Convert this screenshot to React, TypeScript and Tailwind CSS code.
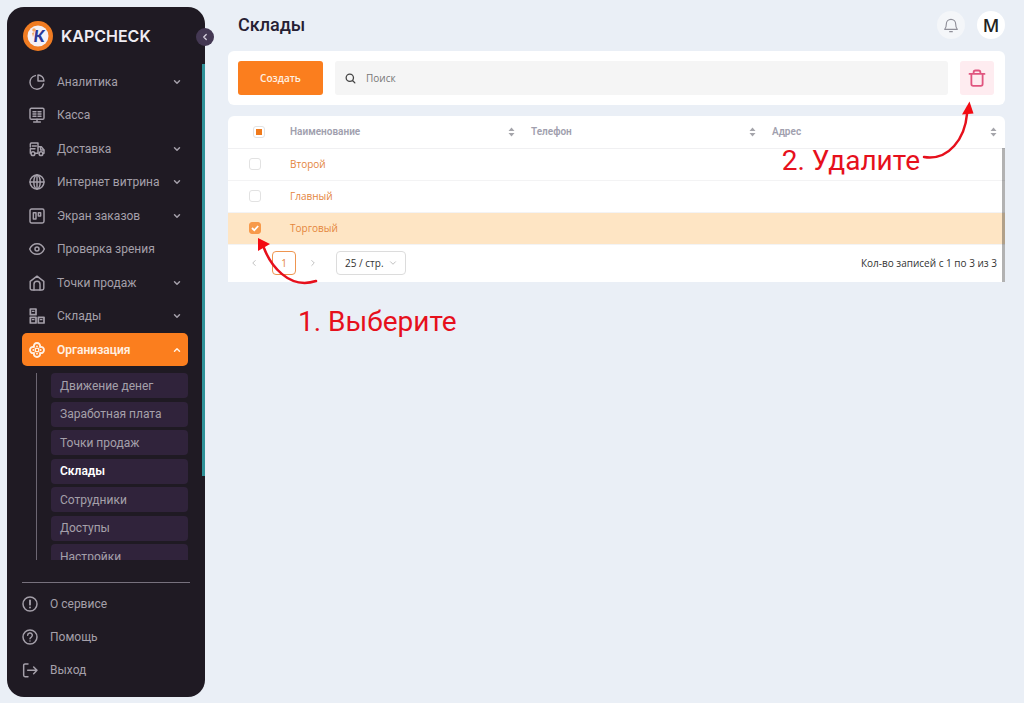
import { useState } from "react";
import type { ReactNode } from "react";
import { ChevronDown, ChevronLeft, ChevronRight, ChevronUp } from "lucide-react";
import clsx from "clsx";

const Icon = ({ children, className = "size-4" }: { children: ReactNode; className?: string }) => (
  <svg
    viewBox="0 0 24 24"
    fill="none"
    stroke="currentColor"
    strokeWidth="2.2"
    strokeLinecap="round"
    strokeLinejoin="round"
    aria-hidden="true"
    className={clsx("shrink-0", className)}
  >
    {children}
  </svg>
);

const menu = [
  {
    label: "Аналитика",
    expandable: true,
    icon: (
      <>
        <path d="M9.5 2.4A10.3 10.3 0 1 0 21.8 15" />
        <path d="M13.5 1.5v9h9a9 9 0 0 0-9-9z" />
      </>
    ),
  },
  {
    label: "Касса",
    expandable: false,
    icon: (
      <>
        <rect x="1.5" y="2" width="21" height="16.5" rx="2" />
        <path d="M12 18.5v4M7 22.5h10M6 7h4.5M6 10.5h4.5M6 14h4.5M13.5 7H18M13.5 10.5H18M13.5 14H18" />
      </>
    ),
  },
  {
    label: "Доставка",
    expandable: true,
    icon: (
      <>
        <path d="M2 9V4.500A1.500 1.500 0 0 1 3.500 3h10v15.500H9.500M5 7.500h6M2 11.500h7M2 12v6.500M14 8.500h4.500l4 5v5H21" />
        <path d="M22 13.5h-4.5v-5" />
        <circle cx="6" cy="19" r="2.8" />
        <circle cx="18" cy="19" r="2.8" />
      </>
    ),
  },
  {
    label: "Интернет витрина",
    expandable: true,
    icon: (
      <>
        <circle cx="12" cy="12" r="10.5" />
        <ellipse cx="12" cy="12" rx="4.8" ry="10.5" />
        <path d="M1.5 12h21M12 1.5v21" />
      </>
    ),
  },
  {
    label: "Экран заказов",
    expandable: true,
    icon: (
      <>
        <rect x="1.5" y="1.5" width="21" height="21" rx="2.5" />
        <rect x="6.5" y="7" width="4" height="9.5" />
        <rect x="14" y="7" width="3.5" height="5" />
      </>
    ),
  },
  {
    label: "Проверка зрения",
    expandable: false,
    icon: (
      <>
        <path d="M1 12C3.2 7 7.2 4 12 4s8.8 3 11 8c-2.2 5-6.2 8-11 8S3.2 17 1 12z" />
        <circle cx="12" cy="12" r="3" />
      </>
    ),
  },
  {
    label: "Точки продаж",
    expandable: true,
    icon: (
      <>
        <path d="M1.8 9.5 12 1.8l10.2 7.7V20a2.5 2.5 0 0 1-2.5 2.5H4.3A2.5 2.5 0 0 1 1.8 20z" />
        <path d="M7.5 22.5V14a4.5 4.5 0 0 1 9 0v8.500" />
      </>
    ),
  },
  {
    label: "Склады",
    expandable: true,
    icon: (
      <>
        <path d="M2 1.5h8.5V10H2zM2 14h8.5v8.5H2zM14 14h8.5v8.5H14z" strokeWidth="2.6" />
        <path d="M5 5h2.5M5 17.5h2.5M17 17.5h2.5" strokeWidth="2" />
      </>
    ),
  },
];

const submenu = [
  "Движение денег",
  "Заработная плата",
  "Точки продаж",
  "Склады",
  "Сотрудники",
  "Доступы",
  "Настройки",
];

const footerMenu = [
  {
    label: "О сервисе",
    icon: (
      <>
        <circle cx="12" cy="12" r="10.5" />
        <path d="M12 6.5V13M12 17v.2" strokeWidth="2.8" />
      </>
    ),
  },
  {
    label: "Помощь",
    icon: (
      <>
        <circle cx="12" cy="12" r="10.5" />
        <path d="M8.5 9.5a3.5 3.5 0 1 1 5.2 3c-1.2.7-1.7 1.1-1.7 2.3M12 18v.1" />
      </>
    ),
  },
  {
    label: "Выход",
    icon: (
      <>
        <path d="M9 3H4.5a2 2 0 0 0-2 2v15a2 2 0 0 0 2 2H9" />
        <path d="M8.5 12.5h14M17.5 7.5l5 5-5 5" />
      </>
    ),
  },
];

const columns = ["Наименование", "Телефон", "Адрес"];
const warehouses = ["Второй", "Главный", "Торговый"];

const Logo = () => (
  <svg viewBox="0 0 30 30" className="size-[30px]" aria-hidden="true">
    <circle cx="15" cy="15" r="15" fill="#f07c22" />
    <circle cx="15" cy="15" r="10.5" fill="#f4f1f6" />
    <text
      x="16"
      y="21"
      textAnchor="middle"
      fill="#2b3a96"
      fontFamily="Lato, sans-serif"
      fontSize="17"
      fontWeight="900"
      fontStyle="italic"
    >
      K
    </text>
    <circle cx="11" cy="9" r="1.8" fill="#f3a765" />
    <path d="m9 12 2.500-1-1.500 5z" fill="#f3a765" />
  </svg>
);

const Sorter = () => (
  <svg viewBox="0 0 7 10" fill="#a5a5ab" className="h-[10px] w-[7px]" aria-hidden="true">
    <path d="M3.5.5 6.5 4h-6zM3.5 9.5l3-3.5h-6z" />
  </svg>
);

function Sidebar() {
  return (
    <aside className="relative flex w-[198px] shrink-0 flex-col rounded-[17px] bg-[#1f1a23] text-[12px] whitespace-nowrap text-[#a5a0aa]">
      <a href="#home" className="flex h-[58px] shrink-0 items-center gap-2 pl-4">
        <Logo />
        <span className="font-['Inter',sans-serif] text-[16px] font-semibold text-[#efecf2]">KAPCHECK</span>
      </a>
      <button
        aria-label="Свернуть меню"
        className="absolute top-[21px] -right-[9px] z-10 flex size-[18px] items-center justify-center rounded-full bg-[#443853] text-[#d8d2df]"
      >
        <ChevronLeft className="size-[10px]" strokeWidth={3} />
      </button>
      <div className="absolute top-[57px] right-0 h-[412px] w-[3px] bg-[#2f9299]" />

      <nav className="min-h-0 flex-1 overflow-hidden pr-[17px] pl-[15px]">
        <div className="flex min-h-[301px] flex-col justify-between">
          {menu.map((item) => (
            <button key={item.label} className="flex h-[33px] items-center gap-3 pr-[6px] pl-[7px]">
              <Icon>{item.icon}</Icon>
              <span className="flex-1 text-left">{item.label}</span>
              {item.expandable && <ChevronDown className="size-[10px]" strokeWidth={3.5} />}
            </button>
          ))}
          <button className="flex h-[33px] items-center gap-3 rounded-[5px] bg-[#fb7e1e] pr-[6px] pl-[7px] font-semibold text-[#fff0e2]">
            <Icon>
              <g strokeWidth="2.8">
                <path d="M7.500 7.500C6.500 4 9 1.500 12 1.500s5.500 2.500 4.500 6c3.500-1 6 1.500 6 4.500s-2.500 5.500-6 4.500c1 3.500-1.500 6-4.500 6s-5.500-2.500-4.500-6c-3.500 1-6-1.500-6-4.500s2.500-5.500 6-4.500z" />
                <path d="M12 6.500v.1M12 17.400v.1M6.500 12h.1M17.400 12h.1" />
                <rect x="9.500" y="9.500" width="5" height="5" strokeWidth="2" />
              </g>
            </Icon>
            <span className="flex-1 text-left">Организация</span>
            <ChevronUp className="size-[10px]" strokeWidth={3.5} />
          </button>
        </div>
        <div className="mt-[7px] ml-[14px] flex min-h-[196px] flex-col justify-between border-l border-[#6c6672] pl-[14px]">
          {submenu.map((label) => (
            <a
              key={label}
              href="#organization"
              className={clsx(
                "flex h-[25px] items-center rounded-[4px] bg-[#30233b] pl-[9px]",
                label === "Склады" && "font-semibold text-white"
              )}
            >
              {label}
            </a>
          ))}
        </div>
      </nav>

      <div className="mx-[15px] mt-[22px] mb-[11px] border-t border-[#77717d] pt-1">
        {footerMenu.map((item) => (
          <a key={item.label} href="#info" className="flex h-[33px] items-center gap-3">
            <Icon>{item.icon}</Icon>
            {item.label}
          </a>
        ))}
      </div>
    </aside>
  );
}

function Checkbox({
  label,
  checked,
  partial = false,
  onChange,
}: {
  label: string;
  checked: boolean;
  partial?: boolean;
  onChange: () => void;
}) {
  return (
    <span className="relative block size-3">
      <input
        type="checkbox"
        aria-label={label}
        checked={checked}
        onChange={onChange}
        className="block size-3 appearance-none rounded-[3px] border border-[#e2e2e2] bg-white checked:border-[#f79a4b] checked:bg-[#f79a4b]"
      />
      {checked && (
        <svg viewBox="0 0 12 12" fill="none" stroke="#fff" strokeWidth="1.8" className="pointer-events-none absolute inset-0">
          <path d="m3 6 2.3 2.3L9.2 4" />
        </svg>
      )}
      {partial && !checked && <span className="pointer-events-none absolute inset-[3px] bg-[#f07a1c]" />}
    </span>
  );
}

function WarehouseTable() {
  const [selected, setSelected] = useState<string[]>(["Торговый"]);
  const allSelected = selected.length === warehouses.length;

  const toggle = (name: string) =>
    setSelected(selected.includes(name) ? selected.filter((s) => s !== name) : [...selected, name]);

  return (
    <section className="relative mt-[11px]">
      <div className="overflow-hidden rounded-t-[6px] bg-white font-['Open_Sans',sans-serif] text-[10px]">
        <table className="w-full table-fixed">
          <thead>
            <tr className="h-8 border-b border-[#f0f0f2] font-[Roboto,sans-serif] text-[#a19fae]">
              <th className="w-[54px] pl-[25px]">
                <Checkbox
                  label="Выбрать все"
                  checked={allSelected}
                  partial={selected.length > 0}
                  onChange={() => setSelected(allSelected ? [] : warehouses)}
                />
              </th>
              {columns.map((column) => (
                <th key={column} className="px-2 text-left font-semibold">
                  <button className="flex w-full items-center justify-between">
                    {column}
                    <Sorter />
                  </button>
                </th>
              ))}
            </tr>
          </thead>
          <tbody>
            {warehouses.map((name) => (
              <tr
                key={name}
                className={clsx("h-8 border-b border-[#f3f3f4]", selected.includes(name) && "bg-[#fee5c4]")}
              >
                <td className="pl-[21px]">
                  <Checkbox label={name} checked={selected.includes(name)} onChange={() => toggle(name)} />
                </td>
                <td className="px-2 text-[#e4853c]">
                  <a href="#warehouse">{name}</a>
                </td>
                <td />
                <td />
              </tr>
            ))}
          </tbody>
        </table>

        <div className="flex h-[37px] items-center pr-2 pl-[21px] text-[#333]">
          <button aria-label="Назад" className="text-[#b4b4b4]">
            <ChevronLeft className="size-[10px]" />
          </button>
          <button className="ml-[13px] size-6 rounded-[4px] border border-[#ee9550] text-[#e4853c]">1</button>
          <button aria-label="Вперёд" className="ml-3 text-[#b4b4b4]">
            <ChevronRight className="size-[10px]" />
          </button>
          <div className="relative ml-[18px]">
            <select
              aria-label="Записей на странице"
              className="block h-6 w-[70px] appearance-none rounded-[4px] border border-[#dcdcdc] bg-white pl-2"
            >
              <option>25 / стр.</option>
              <option>50 / стр.</option>
            </select>
            <ChevronDown className="pointer-events-none absolute top-[7px] right-2 size-[10px] text-[#b4b4b4]" />
          </div>
          <span className="ml-auto">Кол-во записей с 1 по 3 из 3</span>
        </div>
      </div>
      <div className="absolute top-8 right-0 bottom-0 w-[3px] bg-black/30" />

      <svg viewBox="0 0 72 54" className="pointer-events-none absolute top-[120px] left-[22px] h-[54px] w-[72px]" aria-hidden="true">
        <path d="M14 12C20 28 38 54 66 45" fill="none" stroke="#e6101c" strokeWidth="2.5" strokeLinecap="round" />
        <path d="M8 2v13l12-7z" fill="#f40a12" />
      </svg>
      <p className="absolute top-[186px] left-[70px] text-[28px] leading-[40px] whitespace-nowrap text-[#e6101c]">
        1. Выберите
      </p>

      <svg viewBox="0 0 60 68" className="pointer-events-none absolute -top-5 right-[27px] h-[68px] w-[60px]" aria-hidden="true">
        <path d="M49 18C47 42 31 65 6 61" fill="none" stroke="#e6101c" strokeWidth="2.5" strokeLinecap="round" />
        <path d="M51.5 5.5 44 18.5l11.5-1z" fill="#f40a12" />
      </svg>
      <p className="pointer-events-none absolute top-[25px] right-[85px] text-[28px] leading-[40px] whitespace-nowrap text-[#e6101c]">
        2. Удалите
      </p>
    </section>
  );
}

export default function App() {
  return (
    <div className="flex h-screen gap-[23px] bg-[#eaeff6] pt-[7px] pr-[19px] pb-[6px] pl-[7px] font-[Roboto,sans-serif]">
      <Sidebar />
      <main className="min-w-0 flex-1">
        <header className="mb-2 flex h-9 items-center gap-3 pl-[10px]">
          <h1 className="flex-1 text-[18px] leading-9 font-medium text-[#262033]">Склады</h1>
          <button aria-label="Уведомления" className="flex size-7 items-center justify-center rounded-full bg-[#f4f6f9] text-[#8f8f99]">
            <Icon>
              <path d="M2.5 18.5c2-2 2.500-4 2.500-8a7 7 0 0 1 14 0c0 4 .5 6 2.500 8zM10 22h4" strokeWidth="1.7" />
            </Icon>
          </button>
          <button className="size-7 rounded-full bg-white font-['Open_Sans',sans-serif] text-[18px] leading-7 font-semibold text-[#222]">
            M
          </button>
        </header>

        <div className="flex gap-3 rounded-[6px] bg-white py-[10px] pr-[11px] pl-[10px] font-['Open_Sans',sans-serif]">
          <button className="h-[34px] w-[85px] rounded-[3px] bg-[#fb7e1e] text-[10px] font-semibold text-[#fff0e2]">
            Создать
          </button>
          <label className="flex h-[34px] min-w-0 flex-1 items-center gap-[10px] rounded-[3px] bg-[#f5f5f5] pl-[10px] text-[#444]">
            <Icon className="size-[11px]">
              <g strokeWidth="2.8">
                <circle cx="10.5" cy="10.5" r="8" />
                <path d="m17 17 4.5 4.5" />
              </g>
            </Icon>
            <input
              type="search"
              aria-label="Поиск"
              placeholder="Поиск"
              className="min-w-0 flex-1 bg-transparent text-[10px] outline-none placeholder:text-[#777]"
            />
          </label>
          <button aria-label="Удалить" className="flex size-[34px] items-center justify-center rounded-[3px] bg-[#feecf0] text-[#e0557f]">
            <Icon className="size-[18px]">
              <path
                d="M2 6.5h20M4.5 6.5V20A2.5 2.5 0 0 0 7 22.5h10a2.5 2.5 0 0 0 2.5-2.5V6.5M7.5 6V4.5A2.5 2.5 0 0 1 10 2h4a2.5 2.5 0 0 1 2.5 2.5V6"
                strokeWidth="2.4"
              />
            </Icon>
          </button>
        </div>

        <WarehouseTable />
      </main>
    </div>
  );
}
